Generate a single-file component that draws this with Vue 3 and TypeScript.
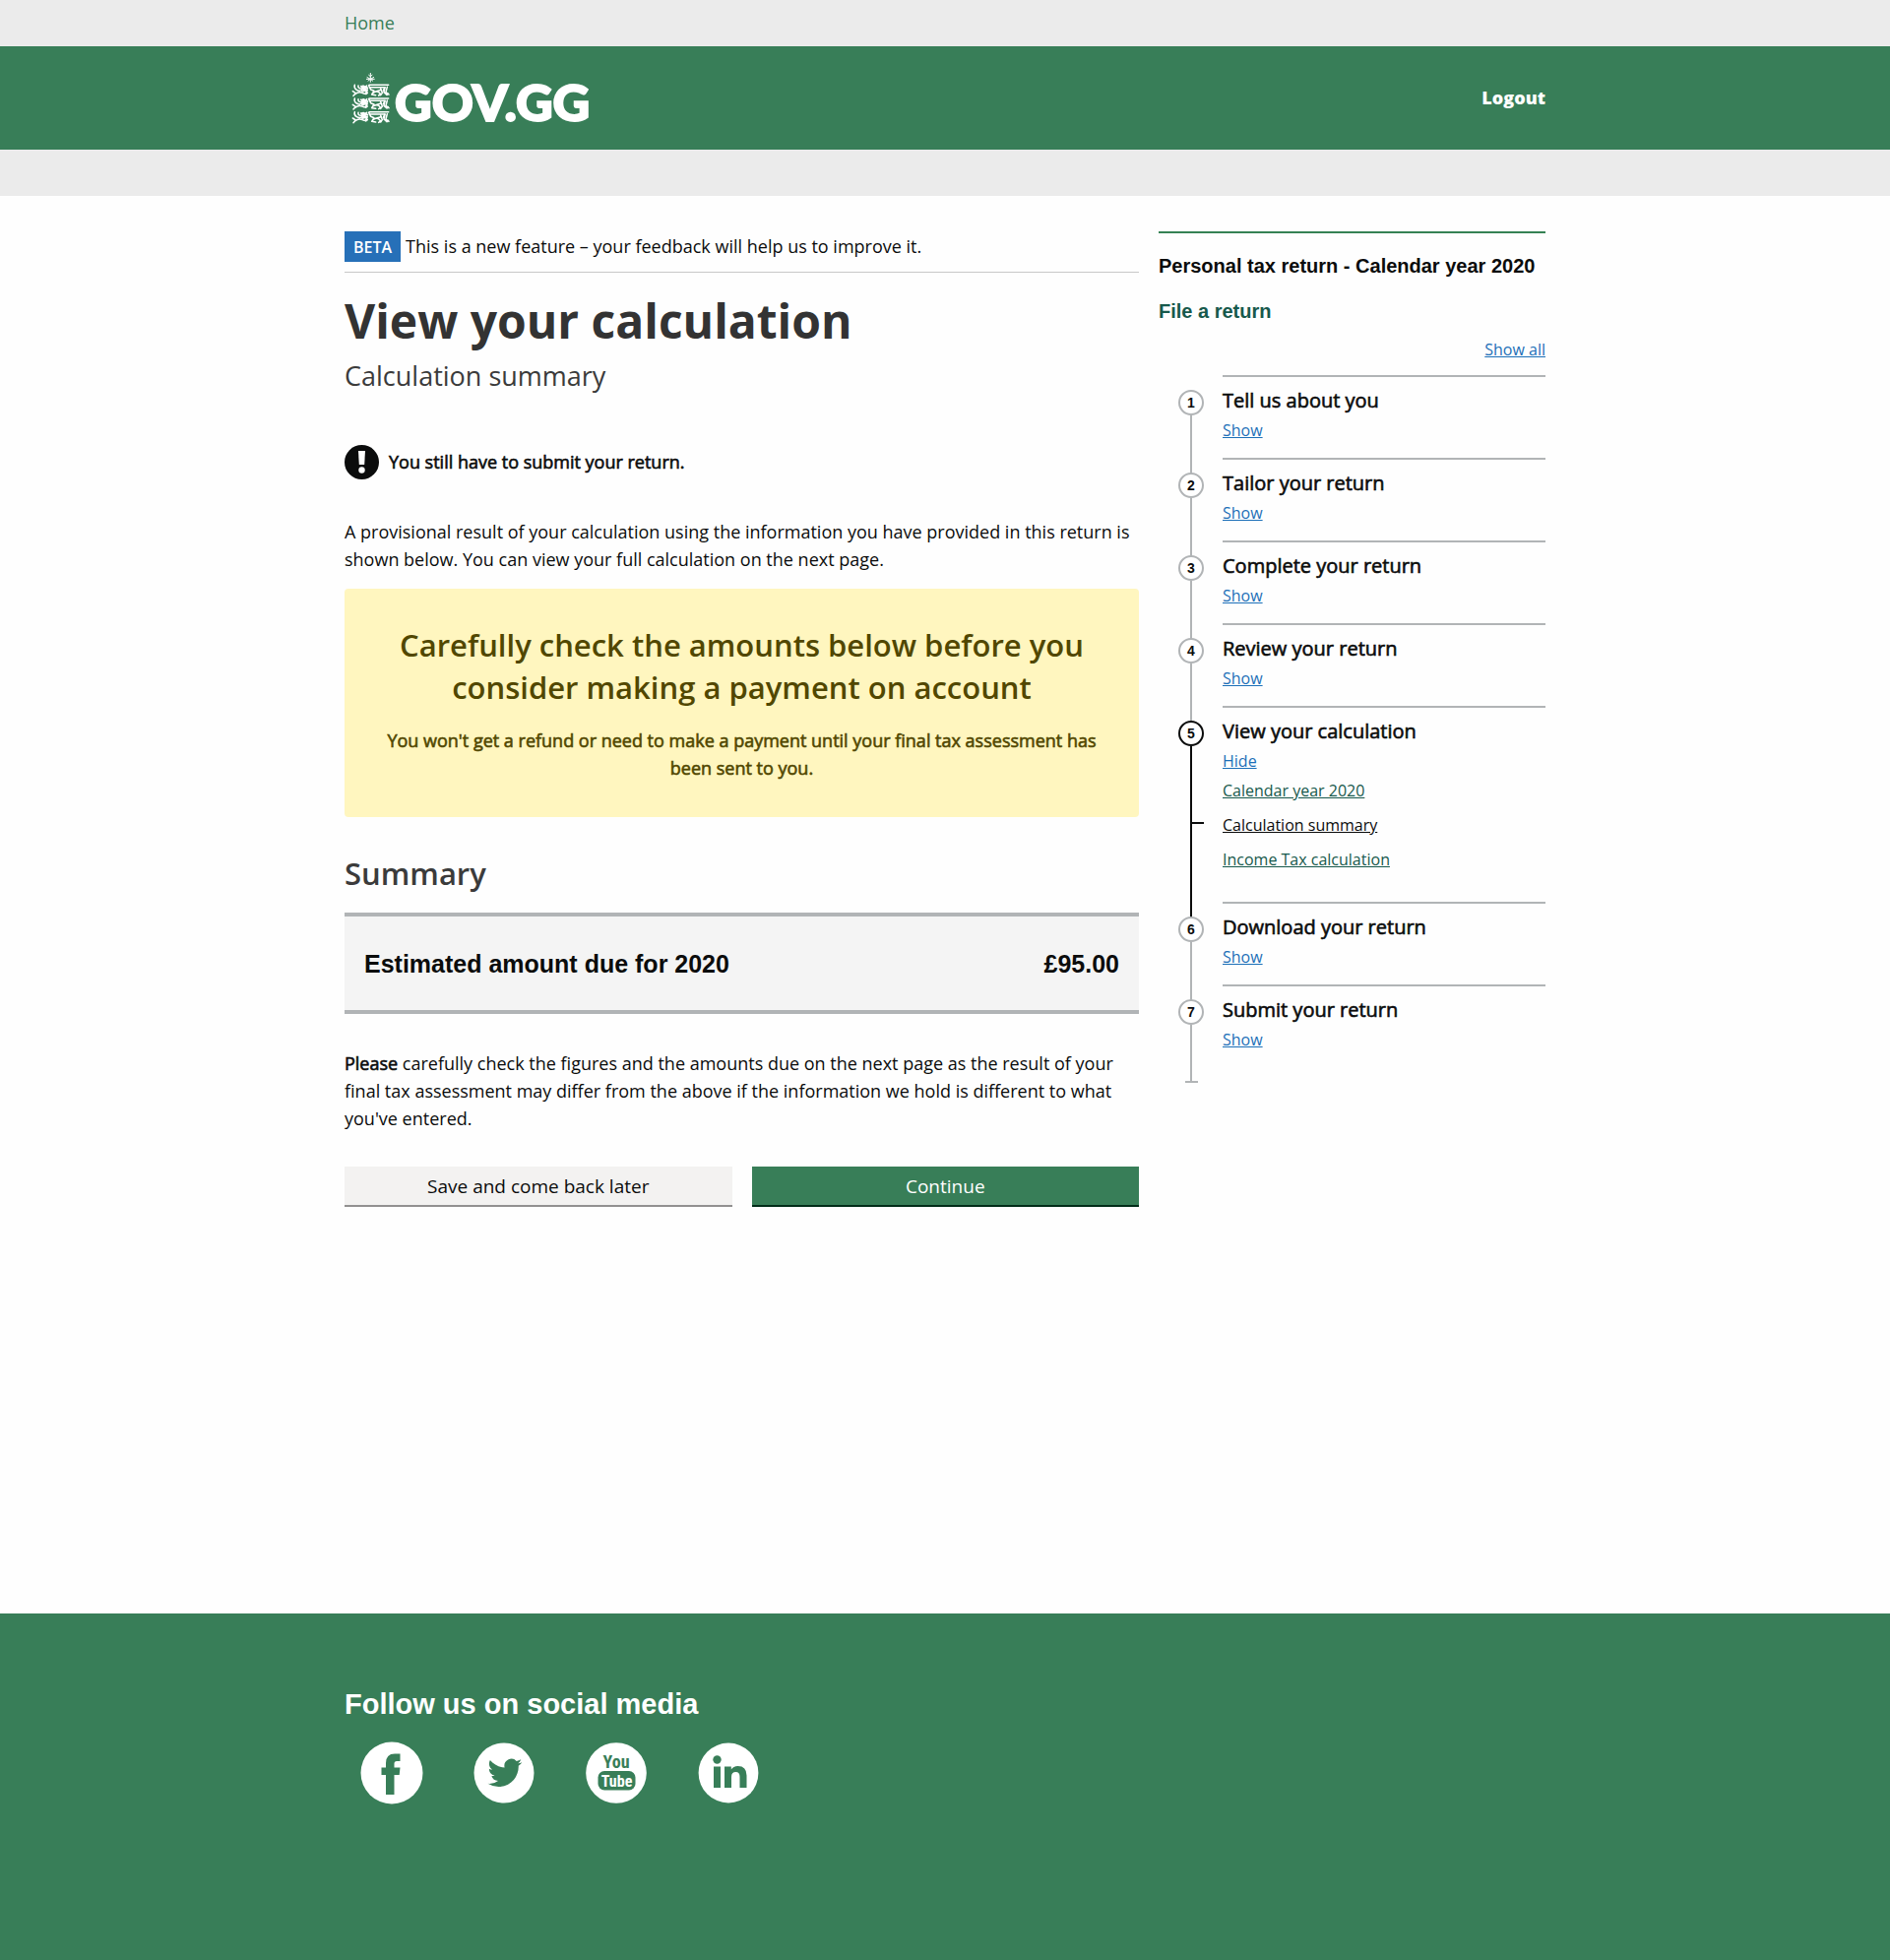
<script setup lang="ts">
import { ref } from 'vue'

interface SubLink {
  label: string
  current?: boolean
}

interface Step {
  number: number
  title: string
  open: boolean
  links: SubLink[]
}

const steps = ref<Step[]>([
  { number: 1, title: 'Tell us about you', open: false, links: [] },
  { number: 2, title: 'Tailor your return', open: false, links: [] },
  { number: 3, title: 'Complete your return', open: false, links: [] },
  { number: 4, title: 'Review your return', open: false, links: [] },
  {
    number: 5,
    title: 'View your calculation',
    open: true,
    links: [
      { label: 'Calendar year 2020' },
      { label: 'Calculation summary', current: true },
      { label: 'Income Tax calculation' },
    ],
  },
  { number: 6, title: 'Download your return', open: false, links: [] },
  { number: 7, title: 'Submit your return', open: false, links: [] },
])

function showAll(): void {
  steps.value.forEach((step) => (step.open = true))
}
</script>

<template>
  <div class="page">
    <nav class="topbar">
      <div class="container"><a class="home" href="#">Home</a></div>
    </nav>
    <header class="masthead">
      <div class="container masthead-row">
        <a class="brand" href="#" aria-label="GOV.GG">
          <svg class="crest" viewBox="0 0 117 156" aria-hidden="true">
            <defs>
              <g id="lion" fill="none" stroke="#fff" stroke-width="4.6" stroke-linecap="round" stroke-linejoin="round">
                <path d="M9 3Q6 12 15 18T33 17M20 5Q18 13 28 14T46 5M3 22L12 28L5 36M10 31Q21 22 32 27T48 27" />
                <path d="M29 7L39 18M35 6L48 12M32 22L47 18L43 30M36 10L46 21" stroke-width="6" />
                <path d="M53 3H112M56 10H101L96 20M52 5L58 17L68 21L61 32L73 34M73 23L89 18M65 27Q79 17 88 31L82 35" />
                <path d="M101 10L98 25L107 33L111 29M108 9L104 25L113 32M88 13L93 27L88 34" />
              </g>
            </defs>
            <path d="M58 0V29M52 6L58 11L64 6M47 13L58 19L69 13M50 25L58 19L66 25M45 19H71" fill="none" stroke="#fff" stroke-width="3" />
            <use href="#lion" x="1" y="34" />
            <use href="#lion" x="1" y="75" />
            <use href="#lion" x="1" y="116" />
          </svg>
          <span class="wordmark">GOV.GG</span>
        </a>
        <a class="logout" href="#">Logout</a>
      </div>
    </header>
    <div class="subbar"></div>

    <div class="container columns">
      <main class="main">
        <div class="phase">
          <strong class="tag">BETA</strong>
          <span class="phase-text">This is a new feature – your feedback will help us to improve it.</span>
        </div>
        <h1>View your calculation</h1>
        <p class="caption">Calculation summary</p>

        <div class="warning">
          <svg class="warning-icon" viewBox="0 0 35 35" aria-hidden="true">
            <circle cx="17.5" cy="17.5" r="17.5" fill="#0b0c0c" />
            <path d="M14 6H21L20.2 20H14.8Z" fill="#fff" />
            <circle cx="17.5" cy="25.500" r="3.200" fill="#fff" />
          </svg>
          <strong class="strong warning-text">You still have to submit your return.</strong>
        </div>

        <p class="intro">
          A provisional result of your calculation using the information you have provided in this return is shown
          below. You can view your full calculation on the next page.
        </p>

        <section class="notice">
          <h2>Carefully check the amounts below before you consider making a payment on account</h2>
          <p class="strong">
            You won't get a refund or need to make a payment until your final tax assessment has been sent to you.
          </p>
        </section>

        <h2 class="section-title">Summary</h2>
        <table class="amounts">
          <tbody>
            <tr>
              <th scope="row">Estimated amount due for 2020</th>
              <td>£95.00</td>
            </tr>
          </tbody>
        </table>

        <p class="closing">
          <strong class="strong">Please</strong> carefully check the figures and the amounts due on the next page as
          the result of your final tax assessment may differ from the above if the information we hold is different to
          what you've entered.
        </p>

        <div class="actions">
          <button type="button" class="button secondary">Save and come back later</button>
          <button type="button" class="button primary">Continue</button>
        </div>
      </main>

      <aside class="side">
        <h2 class="side-title">Personal tax return - Calendar year 2020</h2>
        <h3 class="side-subtitle">File a return</h3>
        <div class="show-all"><button type="button" class="link" @click="showAll">Show all</button></div>
        <ol class="steps">
          <li v-for="step in steps" :key="step.number" class="step" :class="{ active: step.number === 5 }">
            <div class="rail">
              <span class="circle">{{ step.number }}</span>
              <span class="line"></span>
            </div>
            <div class="step-body">
              <h4>{{ step.title }}</h4>
              <button type="button" class="link" @click="step.open = !step.open">
                {{ step.open ? 'Hide' : 'Show' }}
              </button>
              <ul v-if="step.open && step.links.length" class="sublinks">
                <li v-for="link in step.links" :key="link.label" :class="{ current: link.current }">
                  <a href="#">{{ link.label }}</a>
                </li>
              </ul>
            </div>
          </li>
        </ol>
      </aside>
    </div>

    <footer class="footer">
      <div class="container">
        <h2>Follow us on social media</h2>
        <div class="social">
          <a href="#" aria-label="Facebook">
            <svg viewBox="0 0 64 64">
              <circle cx="32" cy="32" r="31.500" fill="#fff" />
              <path d="M26 54V34H21.500V26.500H26V22Q26 12.500 35 12.500H40.500V20H37Q34.500 20 34.500 22.500V26.500H40.500L39.700 34H34.500V54Z" fill="#387e58" />
            </svg>
          </a>
          <a href="#" aria-label="Twitter">
            <svg viewBox="0 0 64 64">
              <circle cx="32" cy="32" r="30.500" fill="#fff" />
              <path transform="translate(15.500 14.500) scale(1.450)" d="M23.950 4.570a10 10 0 0 1-2.820.770 4.960 4.960 0 0 0 2.160-2.720c-.950.560-2 .960-3.130 1.180a4.920 4.920 0 0 0-8.380 4.480C7.690 8.090 4.070 6.130 1.640 3.160a4.820 4.820 0 0 0-.670 2.480c0 1.710.870 3.210 2.190 4.100a4.900 4.900 0 0 1-2.230-.620v.060a4.920 4.920 0 0 0 3.950 4.830 5 5 0 0 1-2.210.080 4.940 4.940 0 0 0 4.600 3.420A9.870 9.870 0 0 1 0 19.540a13.990 13.990 0 0 0 7.550 2.210c9.050 0 14-7.500 14-13.990 0-.210 0-.420-.020-.630a9.940 9.940 0 0 0 2.460-2.550z" fill="#387e58" />
            </svg>
          </a>
          <a href="#" aria-label="YouTube">
            <svg viewBox="0 0 64 64">
              <circle cx="32" cy="32" r="30.800" fill="#fff" />
              <rect x="13.500" y="30" width="38" height="19.500" rx="6.500" fill="#387e58" />
              <text class="tube" x="32" y="27" font-size="18" fill="#387e58">You</text>
              <text class="tube" x="32.500" y="45.500" font-size="16" fill="#fff">Tube</text>
            </svg>
          </a>
          <a href="#" aria-label="LinkedIn">
            <svg viewBox="0 0 64 64">
              <circle cx="32" cy="32" r="30.400" fill="#fff" />
              <circle cx="20.500" cy="18.500" r="4.200" fill="#387e58" />
              <path d="M17 25.500H24V47H17ZM28 25.500H34.800V28.400Q37 24.900 41.500 24.900Q50.500 24.900 50.500 34.500V47H43.500V36Q43.500 30.900 39.500 30.900Q35 30.900 35 36V47H28Z" fill="#387e58" />
            </svg>
          </a>
        </div>
      </div>
    </footer>
  </div>
</template>

<style>
body {
  margin: 0;
  background: #fefefe;
}
</style>

<style scoped>
.page {
  font-family: 'Open Sans', 'Noto Sans', sans-serif;
  font-size: 18px;
  line-height: 28px;
  color: #0b0c0c;
}

h1,
h2,
h3,
h4,
p,
ol,
ul {
  margin: 0;
  padding: 0;
}

ol,
ul {
  list-style: none;
}

.container {
  box-sizing: border-box;
  width: 100%;
  max-width: 1260px;
  margin: 0 auto;
  padding: 0 20px;
}

.topbar {
  background: #ebebeb;
  padding: 9px 0 10px;
}

.home {
  color: #387e58;
  text-decoration: none;
}

.masthead {
  background: #387e58;
}

.masthead-row {
  display: flex;
  align-items: center;
  justify-content: space-between;
  height: 105px;
}

.brand {
  display: flex;
  align-items: center;
  gap: 5px;
  padding-left: 7px;
  color: #fff;
  text-decoration: none;
}

.crest {
  width: 39px;
  height: 52px;
}

.wordmark {
  padding-top: 7px;
  font-family: Lato, sans-serif;
  font-weight: 900;
  font-size: 52px;
  line-height: 56px;
  -webkit-text-stroke: 2px currentColor;
}

.logout {
  padding-bottom: 2px;
  color: #fff;
  font-weight: 800;
  text-decoration: none;
}

.subbar {
  height: 47px;
  background: #ebebeb;
}

.columns {
  display: flex;
  align-items: flex-start;
  gap: 20px;
  padding-top: 36px;
  padding-bottom: 413px;
}

.main {
  flex: 1;
  min-width: 0;
}

.side {
  box-sizing: border-box;
  flex: 0 0 393px;
  border-top: 2px solid #358254;
  padding-top: 19px;
}

.phase {
  display: flex;
  align-items: center;
  gap: 5px;
  padding-bottom: 10px;
  border-bottom: 1px solid #c8c8c8;
}

.phase-text,
.warning-text {
  padding-bottom: 2px;
}

.tag {
  padding: 2px 9px 1px;
  background: #2670b8;
  color: #fff;
  font-size: 16px;
  font-weight: 600;
}

h1 {
  margin-top: 17px;
  color: #333;
  font-size: 48px;
  line-height: 64px;
  font-weight: 700;
}

.caption {
  margin-top: 5px;
  color: #3b3b3b;
  font-size: 27px;
  line-height: 38px;
}

.warning {
  display: flex;
  align-items: center;
  gap: 10px;
  margin-top: 51px;
}

.warning-icon {
  width: 35px;
  height: 35px;
}

/* Emphasis keeps the regular cut and thickens its strokes. */
.strong {
  font-weight: 400;
  -webkit-text-stroke: 0.6px currentColor;
}

.intro {
  margin-top: 39px;
}

.notice {
  margin-top: 16px;
  padding: 36px;
  border-radius: 4px;
  background: #fff6bf;
  color: #514700;
  text-align: center;
}

.notice h2,
.section-title {
  font-size: 31px;
  line-height: 43px;
  font-weight: 600;
}

.notice p {
  margin-top: 18px;
}

.section-title {
  margin: 36px 0 18px;
  color: #3b3b3b;
}

.amounts {
  width: 100%;
  border-collapse: separate;
  border-spacing: 0;
  border-top: 4px solid #b1b4b6;
  border-bottom: 4px solid #b1b4b6;
  background: #f4f4f4;
  font-family: 'Liberation Sans', Arial, sans-serif;
  font-size: 25px;
  line-height: 35px;
}

.amounts th,
.amounts td {
  padding: 31px 20px 29px;
  text-align: left;
  font-weight: 700;
}

.amounts td {
  text-align: right;
}

.closing {
  margin-top: 36px;
}

.actions {
  display: flex;
  gap: 20px;
  margin-top: 35px;
}

.button {
  flex: 1;
  height: 41px;
  padding: 0;
  border: 0;
  border-bottom: 2px solid;
  border-radius: 0;
  font: inherit;
  font-size: 19px;
  cursor: pointer;
}

.secondary {
  border-color: #929191;
  background: #f3f2f1;
  color: #0b0c0c;
}

.primary {
  border-color: #002d18;
  background: #387e58;
  color: #fff;
}

.side-title,
.side-subtitle {
  font-family: 'Liberation Sans', Arial, sans-serif;
  font-size: 20px;
  line-height: 28px;
  font-weight: 700;
}

.side-subtitle {
  margin: 18px 0 14px;
  color: #17594c;
}

.show-all {
  display: flex;
  justify-content: flex-end;
  margin-bottom: 15px;
}

.link {
  display: block;
  padding: 0;
  border: 0;
  background: none;
  color: #1d70b8;
  font: inherit;
  font-size: 16px;
  line-height: 22px;
  text-decoration: underline;
  cursor: pointer;
}

.step {
  display: flex;
  gap: 19px;
  padding-left: 20px;
}

.rail {
  display: flex;
  flex-direction: column;
  align-items: center;
  width: 26px;
  padding-top: 15px;
}

.circle {
  position: relative;
  z-index: 1;
  box-sizing: border-box;
  width: 26px;
  height: 26px;
  border: 2px solid #b1b4b6;
  border-radius: 50%;
  background: #fff;
  font-family: 'Liberation Sans', Arial, sans-serif;
  font-size: 14px;
  line-height: 22px;
  font-weight: 700;
  text-align: center;
}

.line {
  flex: 1;
  width: 2px;
  margin-bottom: -16px;
  background: #b1b4b6;
}

.step:last-child .line {
  display: flex;
  align-items: flex-end;
  justify-content: center;
}

.step:last-child .line::after {
  content: '';
  flex: 0 0 13px;
  height: 2px;
  background: #b1b4b6;
}

.active .circle {
  border-color: #0b0c0c;
}

.active .line {
  background: #0b0c0c;
}

.step-body {
  flex: 1;
  padding: 10px 0 17px;
  border-top: 2px solid #b1b4b6;
}

.step-body h4 {
  margin-bottom: 5px;
  font-size: 20px;
  line-height: 28px;
  font-weight: 400;
  -webkit-text-stroke: 0.6px currentColor;
}

.sublinks {
  display: flex;
  flex-direction: column;
  gap: 13px;
  margin: 8px 0 15px;
  font-size: 16px;
  line-height: 22px;
}

.sublinks li {
  position: relative;
}

.sublinks a {
  color: #17594c;
}

.sublinks .current a {
  color: #0b0c0c;
}

.sublinks .current::before {
  content: '';
  position: absolute;
  top: 8px;
  left: -33px;
  width: 14px;
  height: 2px;
  background: #0b0c0c;
}

.footer {
  background: #387e58;
  color: #fff;
  padding: 73px 0 158px;
}

.footer h2 {
  font-family: 'Liberation Sans', Arial, sans-serif;
  font-size: 29px;
  line-height: 38px;
  font-weight: 700;
}

.social {
  display: flex;
  gap: 50px;
  margin-top: 19px;
  padding-left: 16px;
}

.social svg {
  display: block;
  width: 64px;
  height: 64px;
}

.tube {
  font-family: 'Liberation Sans Narrow', 'Roboto Condensed', sans-serif;
  font-weight: 700;
  text-anchor: middle;
}
</style>
